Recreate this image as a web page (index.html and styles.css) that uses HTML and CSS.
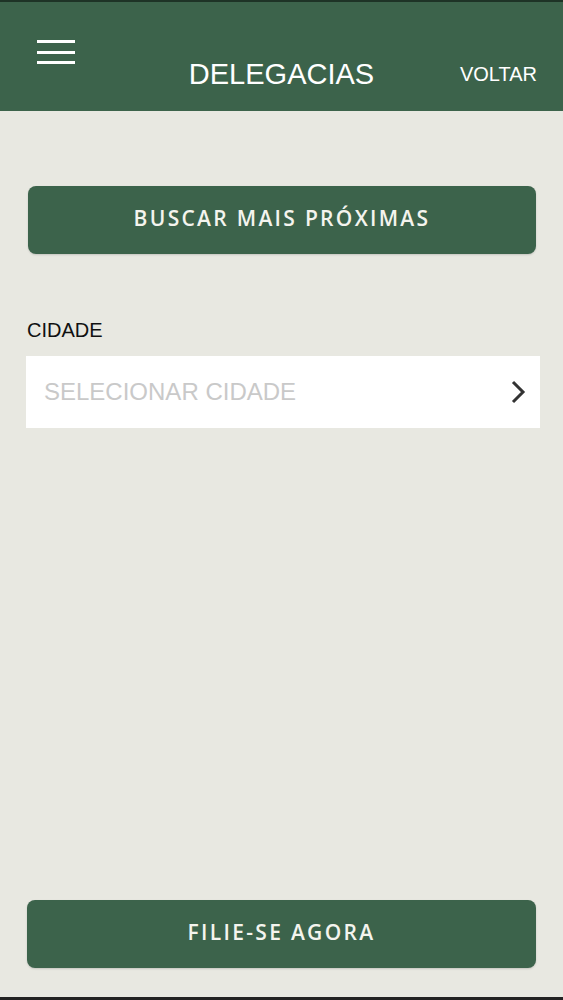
FILE: index.html
```html
<!DOCTYPE html>
<html lang="pt-BR">

<head>
    <meta charset="UTF-8">
    <meta name="viewport" content="width=device-width, initial-scale=1.0">
    <title>Delegacias</title>
    <link rel="stylesheet" href="styles.css">
</head>

<body>
    <div class="screen">
        <header class="topbar">
            <button class="menu" aria-label="Menu">
                <span></span>
                <span></span>
                <span></span>
            </button>
            <h1 class="title">DELEGACIAS</h1>
            <a class="back" href="#">VOLTAR</a>
        </header>

        <main class="content">
            <button class="action">BUSCAR MAIS PRÓXIMAS</button>

            <label class="label">CIDADE</label>
            <div class="select">
                <span class="placeholder">SELECIONAR CIDADE</span>
                <svg class="chevron" width="16" height="24" viewBox="0 0 16 24">
                    <path d="M3 2 L13 12 L3 22" fill="none" stroke="#333" stroke-width="3" />
                </svg>
            </div>
        </main>

        <footer class="bottom">
            <button class="action">FILIE-SE AGORA</button>
        </footer>
    </div>
</body>

</html>
```

FILE: styles.css
```css
html,
body {
    margin: 0;
    height: 100%;
}

body {
    background-color: #e8e8e1;
    font-family: "Liberation Sans", Arial, sans-serif;
}

.screen {
    height: 1000px;
    display: flex;
    flex-direction: column;
    border-top: 2px solid #1e3326;
    border-bottom: 3px solid #222;
    box-sizing: border-box;
}

.topbar {
    height: 109px;
    background-color: #3c634b;
    display: grid;
    grid-template-columns: 1fr auto 1fr;
    align-items: start;
    padding: 0 26px;
    box-sizing: border-box;
}

.menu {
    width: 38px;
    height: 24px;
    margin: 38px 0 0 11px;
    padding: 0;
    background: none;
    border: none;
    display: flex;
    flex-direction: column;
    justify-content: space-between;
    cursor: pointer;
}

.menu span {
    display: block;
    height: 3px;
    width: 100%;
    background-color: #fff;
}

.title {
    margin: 58px 0 0;
    font-size: 29px;
    font-weight: normal;
    color: #fff;
    line-height: 1;
}

.back {
    justify-self: end;
    margin-top: 62px;
    font-size: 20px;
    color: #fff;
    text-decoration: none;
    line-height: 1;
}

.content {
    flex: 1;
    padding: 75px 27px 0 26px;
    display: flex;
    flex-direction: column;
}

.action {
    width: 100%;
    height: 68px;
    padding: 0 0 5px;
    background-color: #3c634b;
    color: #f4f4ee;
    border: none;
    border-radius: 8px;
    font-family: "Open Sans", sans-serif;
    font-weight: 600;
    font-size: 21px;
    letter-spacing: 2.3px;
    cursor: pointer;
    box-shadow: 0 1px 2px rgba(0, 0, 0, 0.15);
}

.content .action {
    margin-left: 2px;
    width: 508px;
}

.label {
    margin: 64px 0 0 1px;
    font-size: 20px;
    color: #111;
    line-height: 24px;
}

.select {
    margin-top: 14px;
    height: 72px;
    width: 514px;
    background-color: #fff;
    display: flex;
    align-items: center;
    justify-content: space-between;
    padding: 0 14px 0 18px;
    box-sizing: border-box;
}

.placeholder {
    font-size: 24px;
    color: #c9c9c9;
}

.bottom {
    padding: 0 27px 29px;
}
```
